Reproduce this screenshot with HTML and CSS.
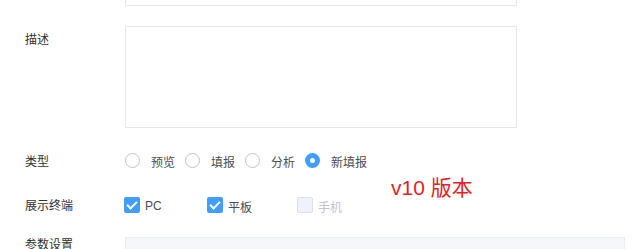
FILE: index.html
```html
<!DOCTYPE html>
<html lang="zh">
<head>
	<meta charset="UTF-8">
	<title>form</title>
	<link rel="stylesheet" href="styles.css">
</head>
<body>
	<div class="form">
		<div class="row row-top">
			<div class="label"></div>
			<div class="input-tail"></div>
		</div>
		<div class="row row-desc">
			<div class="label">描述</div>
			<div class="textarea"></div>
		</div>
		<div class="row row-type">
			<div class="label">类型</div>
			<div class="radios">
				<span class="radio"><i></i><b>预览</b></span>
				<span class="radio"><i></i><b>填报</b></span>
				<span class="radio"><i></i><b>分析</b></span>
				<span class="radio on"><i></i><b>新填报</b></span>
			</div>
		</div>
		<div class="row row-term">
			<div class="label">展示终端</div>
			<div class="checks">
				<span class="check on c1"><i></i><b>PC</b></span>
				<span class="check on c2"><i></i><b>平板</b></span>
				<span class="check off"><i></i><b>手机</b></span>
			</div>
		</div>
		<div class="row row-param">
			<div class="label">参数设置</div>
			<div class="table">
				<div class="thead">
					<span>名称</span>
					<span>类型</span>
					<span>值</span>
					<span class="ops">
						<svg width="14" height="14" viewBox="0 0 14 14"><circle cx="7" cy="7" r="5.5" fill="none" stroke="#909399" stroke-width="1.4"/></svg>
						<svg width="14" height="14" viewBox="0 0 14 14"><path d="M7 2v10M2 7h10" stroke="#67c23a" stroke-width="1.6"/></svg>
					</span>
				</div>
			</div>
		</div>
	</div>
	<div class="version">v10 版本</div>
</body>
</html>
```

FILE: styles.css
```css
body{
	margin: 0;
	font-family: "Liberation Sans", "Noto Sans CJK SC", sans-serif;
	font-size: 12px;
	color: #4a4d55;
	background: #fff;
	overflow: hidden;
}
b{
	font-weight: normal;
	padding-top: 2px;
}
.form{
	padding-left: 25px;
}
.row{
	display: flex;
	align-items: flex-start;
}
.label{
	width: 100px;
	flex: none;
	line-height: 20px;
	padding-top: 1px;
	color: #303133;
}
.row-top .label{
	padding-top: 0;
}
.input-tail{
	width: 390px;
	height: 5px;
	border: 1px solid #e4e7ed;
	border-top: none;
}
.row-desc{
	margin-top: 20px;
}
.row-desc .label{
	padding-top: 4px;
}
.textarea{
	width: 390px;
	height: 100px;
	border: 1px solid #e4e7ed;
}
.row-type{
	margin-top: 22px;
}
.row-type .label{
	padding-top: 2px;
}
.radios, .checks{
	display: flex;
	align-items: center;
	height: 20px;
}
.radio{
	display: flex;
	align-items: center;
	margin-right: 10px;
}
.radio i{
	width: 13px;
	height: 13px;
	border: 1px solid #c0c4cc;
	border-radius: 50%;
	margin-right: 11px;
	box-sizing: content-box;
}
.radio.on i{
	border: 5px solid #409eff;
	width: 5px;
	height: 5px;
	background: #fff;
}
.row-term{
	margin-top: 23px;
}
.row-term .checks{
	margin-left: -1px;
}
.check{
	display: flex;
	align-items: center;
}
.check i{
	width: 16px;
	height: 16px;
	border-radius: 2px;
	margin-right: 5px;
	box-sizing: border-box;
	position: relative;
}
.check.on i{
	background: #409eff;
}
.check.on i:after{
	content: "";
	position: absolute;
	left: 5px;
	top: 2px;
	width: 4px;
	height: 8px;
	border: solid #fff;
	border-width: 0 2px 2px 0;
	transform: rotate(45deg);
}
.check.off i{
	background: #edf2fc;
	border: 1px solid #dcdfe6;
}
.check.off{
	color: #c0c4cc;
}
.c1{
	width: 83px;
}
.c2{
	width: 90px;
}
.row-param{
	margin-top: 18px;
}
.table{
	margin-top: 3px;
	width: 500px;
}
.thead{
	display: grid;
	grid-template-columns: 149px 160px 128px 1fr;
	padding: 8px 0 0 13px;
	height: 30px;
	box-sizing: border-box;
	background: #f5f7fa;
	border: 1px solid #ebeef5;
	color: #909399;
	line-height: 20px;
}
.ops{
	display: flex;
	gap: 21px;
	padding-top: 3px;
}
.version{
	position: absolute;
	left: 391px;
	top: 171px;
	font-size: 21px;
	color: #e0261c;
}
```
